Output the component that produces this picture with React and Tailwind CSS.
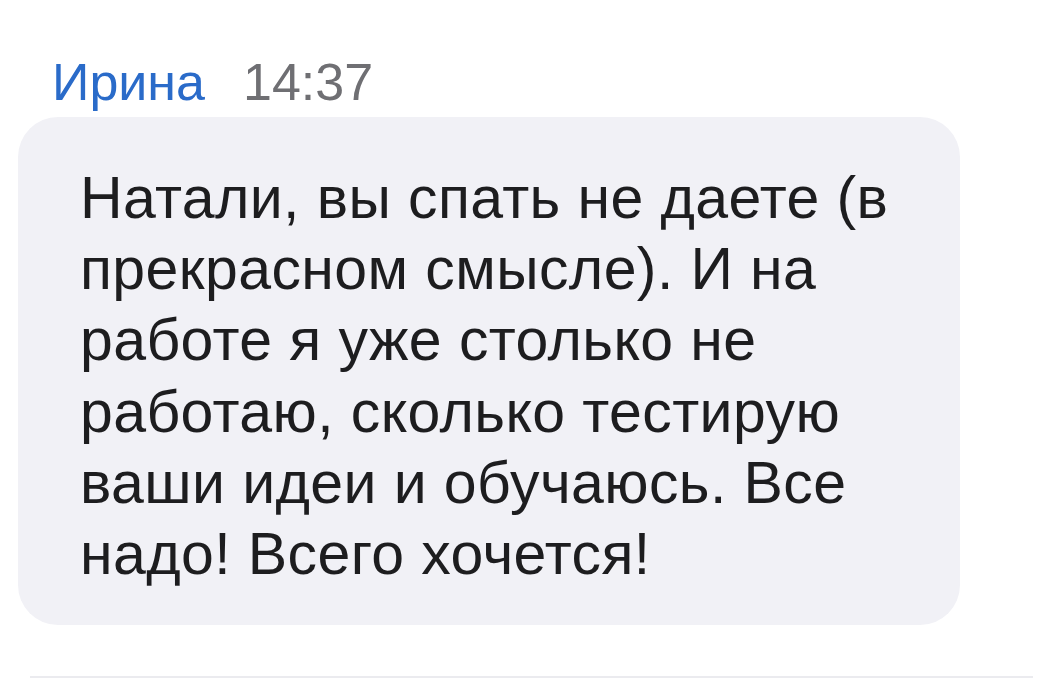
import React from "react";

const LINES = [
  "Натали, вы спать не даете (в",
  "прекрасном смысле). И на",
  "работе я уже столько не",
  "работаю, сколько тестирую",
  "ваши идеи и обучаюсь. Все",
  "надо! Всего хочется!",
];

export default function App() {
  return (
    <div className="w-[1062px] h-[678px] bg-white overflow-hidden flex flex-col" style={{ fontFamily: '"Liberation Sans", Arial, sans-serif' }}>
      <div className="pt-[54px] pl-[52px] flex items-baseline gap-[38px] h-[110px] leading-[56px] text-[52px]">
        <span className="text-[#2a6bc9]">Ирина</span>
        <span className="text-[#6f6f73]">14:37</span>
      </div>
      <div className="mt-[7px] ml-[18px] w-[942px] h-[508px] rounded-[40px] bg-[#f1f1f6] pl-[62px] pt-[46px]">
        {LINES.map((l) => (
          <div key={l} className="text-[59px] leading-[71.2px] tracking-[0.4px] text-[#1d1d1f] whitespace-nowrap">{l}</div>
        ))}
      </div>
      <div className="mt-auto ml-[30px] w-[1003px] h-[2px] bg-[#ebebef]" />
    </div>
  );
}
